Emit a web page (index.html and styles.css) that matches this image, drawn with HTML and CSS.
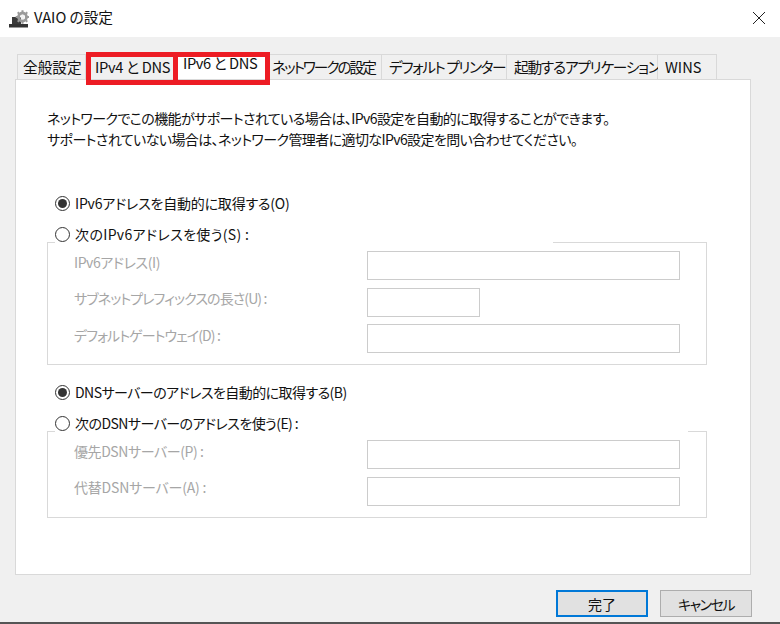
FILE: index.html
```html
<!DOCTYPE html>
<html lang="ja">
<head>
<meta charset="utf-8">
<title>VAIO の設定</title>
<link rel="stylesheet" href="styles.css">
</head>
<body>
<div class="window">
  <header class="titlebar">
    <svg class="app-icon" viewBox="0 0 20 18" aria-hidden="true">
      <path d="M3 7h9v8H3z" fill="#3a3a3a"/>
      <path d="M0 14h19v3.5H0z" fill="#333"/>
      <g fill="none" stroke="#9a9a9a">
        <circle cx="13.5" cy="7" r="4" stroke-width="2.8"/>
        <path d="M13.5 0.2v2.4M13.5 11.4v2.4M6.7 7h2.4M17.9 7h2.1M8.7 2.2l1.7 1.7M16.6 10.1l1.7 1.7M18.3 2.2l-1.7 1.7M10.4 10.1l-1.7 1.7" stroke-width="2"/>
      </g>
      <circle cx="13.5" cy="7" r="2.2" fill="#f2f2f2"/>
    </svg>
    <span class="title">VAIO の設定</span>
    <svg class="close" viewBox="0 0 12 12" aria-hidden="true"><path d="M0 0L12 12M12 0L0 12" stroke="#222" stroke-width="1" fill="none"/></svg>
  </header>

  <main class="body">
    <nav class="tabs">
      <div class="tab tab-general">全般設定</div>
      <div class="tab tab-v4">IPv4 と DNS</div>
      <div class="tab tab-v6">IPv6 と DNS</div>
      <div class="tab tab-net">ネットワークの設定</div>
      <div class="tab tab-printer">デフォルト プリンター</div>
      <div class="tab tab-apps">起動するアプリケーション</div>
      <div class="tab tab-wins">WINS</div>
      <div class="mark mark-v4"></div>
      <div class="mark mark-v6"></div>
    </nav>

    <section class="panel">
      <p class="intro">ネットワークでこの機能がサポートされている場合は、IPv6設定を自動的に取得することができます。<br>サポートされていない場合は、ネットワーク管理者に適切なIPv6設定を問い合わせてください。</p>

      <div class="radio first"><span class="dot on"></span><span class="t-auto-ip">IPv6アドレスを自動的に取得する(O)</span></div>
      <div class="radio legend legend-ip"><span class="dot"></span><span class="t-man-ip">次のIPv6アドレスを使う(S) :</span></div>
      <div class="group group-ip">
        <div class="field"><label class="l-ip">IPv6アドレス(I)</label><span class="input"></span></div>
        <div class="field"><label class="l-tight">サブネットプレフィックスの長さ(U) :</label><span class="input short"></span></div>
        <div class="field"><label class="l-tight">デフォルトゲートウェイ(D) :</label><span class="input"></span></div>
      </div>

      <div class="radio second"><span class="dot on"></span><span class="t-auto-dns">DNSサーバーのアドレスを自動的に取得する(B)</span></div>
      <div class="radio legend legend-dns"><span class="dot"></span><span class="t-auto-dns">次のDSNサーバーのアドレスを使う(E) :</span></div>
      <div class="group group-dns">
        <div class="field"><label class="l-ip">優先DSNサーバー(P) :</label><span class="input"></span></div>
        <div class="field"><label class="l-alt">代替DSNサーバー(A) :</label><span class="input"></span></div>
      </div>
    </section>

    <footer class="actions">
      <button class="btn primary">完了</button>
      <button class="btn cancel">キャンセル</button>
    </footer>
  </main>
  <div class="edge"></div>
</div>
</body>
</html>
```

FILE: styles.css
```css
* { box-sizing: border-box; }
html, body { margin: 0; padding: 0; }
body {
  width: 780px;
  height: 624px;
  overflow: hidden;
  font-family: "Noto Sans CJK JP", "Noto Sans", sans-serif;
  font-size: 14px;
  font-feature-settings: "palt";
  color: #111;
  background: #f0f0f0;
}
.window { display: flex; flex-direction: column; height: 624px; }

.titlebar {
  height: 37px;
  flex: none;
  background: #fff;
  display: flex;
  align-items: center;
  padding: 0 15px 0 9px;
}
.app-icon { width: 20px; height: 18px; margin-right: 5px; }
.title { flex: 1; font-size: 14.67px; line-height: 1; padding-bottom: 2px; }
.close { width: 12px; height: 12px; margin-top: -1px; }

.body { flex: 1; display: flex; flex-direction: column; padding: 0 0 0 15px; }

.tabs {
  position: relative;
  display: flex;
  height: 42px;
  padding: 17px 0 0 2px;
}
.tab {
  height: 25px;
  font-size: 14.67px;
  background: #f0f0f0;
  border: 1px solid #d9d9d9;
  border-bottom: none;
  border-left: none;
  display: flex;
  align-items: center;
  padding-left: 7px;
  white-space: nowrap;
  line-height: 1;
}
.tab-general { width: 69px; border-left: 1px solid #d9d9d9; padding-left: 5px; }
.tab-v4 { width: 89px; padding-left: 9px; letter-spacing: -0.3px; }
.tab-v6 { width: 95px; background: #fff; border: none; padding: 0 0 6px 8px; letter-spacing: -0.4px; }
.tab-net { width: 112px; padding-left: 2px; letter-spacing: -2px; }
.tab-printer { width: 125px; letter-spacing: -1.4px; }
.tab-apps { width: 151px; letter-spacing: -1.2px; }
.tab-wins { width: 59px; }

.mark {
  position: absolute;
  top: 15px;
  height: 33px;
  border: 5px solid #ed1c24;
}
.mark-v4 { left: 71px; width: 92px; }
.mark-v6 { left: 158px; width: 97px; z-index: 2; }

.panel {
  width: 736px;
  height: 496px;
  flex: none;
  background: #fff;
  border: 1px solid #d9d9d9;
  padding: 28px 0 0 31px;
}
.intro { margin: 0; line-height: 21px; letter-spacing: -0.6px; }

.radio {
  height: 22px;
  display: flex;
  align-items: center;
  white-space: nowrap;
  margin-left: 8px;
}
.first { margin-top: 42px; }
.legend { margin-top: 9px; position: relative; z-index: 1; background: #fff; }
.second { margin-top: 16px; }
.legend-ip { width: 498px; }
.legend-dns { width: 633px; }
.t-auto-ip { letter-spacing: -0.2px; }
.t-man-ip { letter-spacing: 0.35px; }
.t-auto-dns { letter-spacing: -0.55px; }

.dot {
  width: 15px;
  height: 15px;
  flex: none;
  margin-right: 5px;
  border: 1px solid #333;
  border-radius: 50%;
  background: #fff;
  display: flex;
  align-items: center;
  justify-content: center;
}
.dot.on::after {
  content: "";
  width: 9px;
  height: 9px;
  border-radius: 50%;
  background: #333;
}

.group {
  width: 660px;
  margin-top: -3px;
  border: 1px solid #d9d9d9;
  display: flex;
  flex-direction: column;
  gap: 7.5px;
  padding: 8px 26px 0 26px;
}
.group-ip { height: 123px; }
.group-dns { height: 87px; }

.field {
  height: 29px;
  display: flex;
  align-items: center;
  justify-content: space-between;
  color: #a6a6a6;
  white-space: nowrap;
}
.field label { flex: none; padding-bottom: 8px; line-height: 1; }
.l-ip { letter-spacing: -0.42px; }
.l-tight { letter-spacing: -0.9px; }
.l-alt { letter-spacing: -0.2px; }
.input {
  width: 313px;
  height: 29px;
  background: #fff;
  border: 1px solid #ccc;
  margin-left: auto;
}
.input.short { width: 113px; margin-right: 200px; }

.actions {
  display: flex;
  gap: 12px;
  padding: 15px 0 0 541px;
}
.btn {
  width: 92px;
  height: 27px;
  font: inherit;
  font-feature-settings: "palt";
  color: #111;
  background: #e1e1e1;
  border: 1px solid #adadad;
  padding: 0;
  line-height: 1;
}
.primary { border: 2px solid #0078d7; }
.cancel { letter-spacing: -1.5px; }

.edge { height: 2px; flex: none; background: #555; }
```
